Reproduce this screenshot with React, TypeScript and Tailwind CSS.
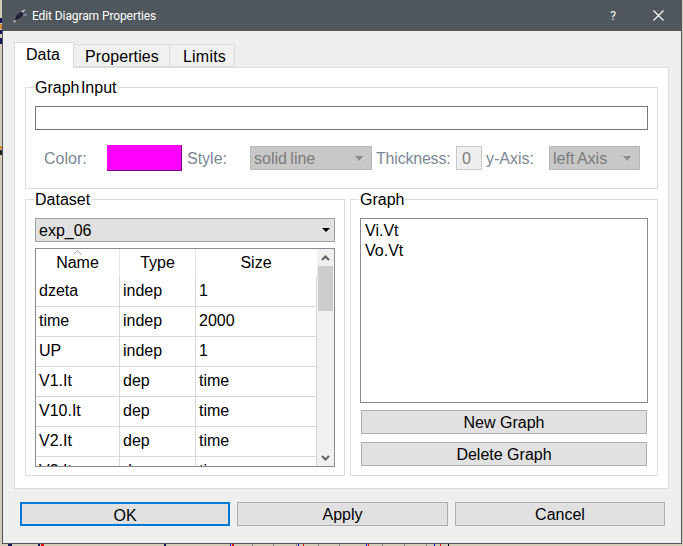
import { ReactNode } from "react";

const rows = [
  ["dzeta", "indep", "1"],
  ["time", "indep", "2000"],
  ["UP", "indep", "1"],
  ["V1.It", "dep", "time"],
  ["V10.It", "dep", "time"],
  ["V2.It", "dep", "time"],
  ["V3.It", "dep", "time"],
];

function Group({ label, className, children }: { label: string; className: string; children: ReactNode }) {
  return (
    <div className={`relative border border-[#dcdcdc] ${className}`}>
      <span className="absolute left-[8px] top-[-11px] bg-white px-px leading-[22px] [word-spacing:-3px]">{label}</span>
      {children}
    </div>
  );
}

function Button({ label, className }: { label: string; className: string }) {
  return (
    <button className={`h-[24px] border border-[#adadad] bg-[#e1e1e1] pt-[2px] leading-[20px] ${className}`}>{label}</button>
  );
}

function DisabledSelect({ label, className }: { label: string; className: string }) {
  return (
    <div className={`flex h-[24px] items-center justify-between border border-[#b8b8b8] bg-[#c8c8c8] pl-[3px] pr-[7px] text-[#7c7c7c] ${className}`}>
      <span className="pt-[2px] [word-spacing:-1px]">{label}</span>
      <svg width="9" height="5" viewBox="0 0 9 5">
        <path d="M0 0H9L4.5 5Z" fill="#8c8c8c" />
        <path d="M4.5 5L9 0V1L5 5Z" fill="#f4f4f4" />
      </svg>
    </div>
  );
}

function Chevron({ down }: { down?: boolean }) {
  return (
    <div className="flex h-[17px] items-center justify-center">
      <svg width="9" height="6" viewBox="0 0 9 6">
        <path d={down ? "M1 1L4.5 4.5L8 1" : "M1 5L4.5 1.5L8 5"} fill="none" stroke="#606060" strokeWidth="2" />
      </svg>
    </div>
  );
}

function DatasetTable() {
  return (
    <div className="mt-[6px] flex h-[219px] w-[300px] overflow-hidden border border-[#868c91] bg-white">
      <div className="w-[281px]">
        <div className="relative grid h-[27px] grid-cols-[84px_76px_121px] text-center leading-[28px]">
          <div className="border-r border-[#e6e6e6]">Name</div>
          <div className="border-r border-[#e6e6e6]">Type</div>
          <div className="pr-px">Size</div>
          <svg className="absolute left-[37px] top-[1px]" width="9" height="5" viewBox="0 0 9 5">
            <path d="M0.5 4.5L4.5 0.8L8.5 4.5" fill="none" stroke="#a0a0a0" />
          </svg>
        </div>
        {rows.map((row) => (
          <div key={row[0]} className="grid h-[30px] grid-cols-[84px_76px_121px] leading-[30px]">
            {row.map((cell, i) => (
              <div key={i} className="border-r border-b border-[#d8d8d8] pl-[3px]">
                {cell}
              </div>
            ))}
          </div>
        ))}
      </div>
      <div className="flex w-[17px] flex-col bg-[#f0f0f0]">
        <Chevron />
        <div className="mx-px h-[45px] bg-[#cdcdcd]" />
        <div className="flex-1" />
        <Chevron down />
      </div>
    </div>
  );
}

function TitleBar() {
  return (
    <div className="flex h-[31px] items-center bg-[#50585d] text-white">
      <svg className="ml-[9px]" width="16" height="16" viewBox="0 0 16 16">
        <path d="M2 14L5 7L9 4L12 6L8 10L5 11Z" fill="#1c1c30" />
        <path d="M9 3L14 1L11 5Z" fill="#b9b9c4" />
        <path d="M11 6H15V7.500H11Z" fill="#8a8fa8" />
        <path d="M1 13L4 12L3 15Z" fill="#c4c4cc" />
        <path d="M6 6L9 5.500L8 8Z" fill="#3b2a6b" />
      </svg>
      <span className="ml-[4px] font-['Roboto',sans-serif] text-[12px] leading-[16px] tracking-[-0.1px]">Edit Diagram Properties</span>
      <span className="ml-auto mr-[37px] font-['Roboto',sans-serif] text-[12px]">?</span>
      <svg className="mr-[17px]" width="11" height="11" viewBox="0 0 11 11">
        <path d="M0.500 0.500L10.500 10.500M10.500 0.500L0.500 10.500" stroke="#ffffff" strokeWidth="1.100" />
      </svg>
    </div>
  );
}

function DataTab() {
  return (
    <div className="mx-[11px] w-[655px]">
      <div className="flex h-[25px] items-end">
        <div className="relative z-10 mb-[-1px] h-[26px] w-[60px] border border-b-0 border-[#dcdcdc] bg-white pl-[11px] leading-[24px]">Data</div>
        <div className="h-[23px] w-[96px] border-y border-r border-[#dcdcdc] bg-[#f0f0f0] pl-[11px] leading-[24px] tracking-[0.1px]">Properties</div>
        <div className="h-[23px] w-[65px] border-y border-r border-[#dcdcdc] bg-[#f0f0f0] pl-[13px] leading-[24px] tracking-[0.2px]">Limits</div>
      </div>
      <div className="h-[422px] border border-[#dcdcdc] bg-white px-[10px] pt-[19px]">
        <Group label="Graph Input" className="h-[102px] w-[633px] px-[9px] pt-[18px]">
          <input className="block h-[24px] w-[613px] border border-[#767676] bg-white" />
          <div className="mt-[15px] flex h-[26px] items-center text-[#7c8794]">
            <span className="w-[72px] pl-[9px] pt-[2px]">Color:</span>
            <div className="h-[26px] w-[75px] border-r border-b border-[#7a0a7a] bg-[#ff00ff]" />
            <span className="w-[68px] pl-[5px] pt-[2px]">Style:</span>
            <DisabledSelect label="solid line" className="w-[122px]" />
            <span className="w-[84px] pl-[4px] pt-[2px] tracking-[-0.2px]">Thickness:</span>
            <div className="h-[24px] w-[26px] border border-[#c8c8c8] bg-[#efefef] pl-[5px] leading-[24px] text-[#7c7c7c]">0</div>
            <span className="w-[67px] pl-[4px] pt-[2px]">y-Axis:</span>
            <DisabledSelect label="left Axis" className="w-[91px]" />
          </div>
        </Group>
        <div className="mt-[10px] flex gap-[5px]">
          <Group label="Dataset" className="h-[277px] w-[320px] px-[9px] pt-[18px]">
            <div className="flex h-[24px] w-[300px] items-center justify-between border border-[#a0a0a0] bg-[#e1e1e1] pl-[3px] pr-[4px]">
              <span className="pt-[2px]">exp_06</span>
              <svg width="8" height="4" viewBox="0 0 8 4">
                <path d="M0 0H8L4 4Z" fill="#000000" />
              </svg>
            </div>
            <DatasetTable />
          </Group>
          <Group label="Graph" className="h-[277px] w-[308px] px-[9px] pt-[18px]">
            <div className="h-[185px] w-[288px] border border-[#868c91] px-[4px] pt-[2px] leading-[20px]">
              <div>Vi.Vt</div>
              <div>Vo.Vt</div>
            </div>
            <Button label="New Graph" className="ml-px mt-[7px] block w-[286px]" />
            <Button label="Delete Graph" className="ml-px mt-[8px] block w-[286px]" />
          </Group>
        </div>
      </div>
    </div>
  );
}

export default function App() {
  return (
    <div className="relative h-[546px] w-[683px] overflow-hidden bg-[#d4ccb6] font-['Liberation_Sans',sans-serif] text-[16px] text-black">
      {/* bits of the plot window behind the dialog */}
      <svg className="absolute inset-0" width="683" height="546" viewBox="0 0 683 546">
        <path d="M0 18h2v5H0ZM0 30h2v4H0ZM0 38h2v6H0Z" fill="#14145a" />
        <path d="M0 24h2v5H0ZM0 146h2v3H0Z" fill="#d98a2b" />
        <path d="M0 150h2v5H0Z" fill="#222222" />
        <path d="M8 544h4v2H8ZM38 544h2v2h-2ZM164 544h2v2h-2Z" fill="#14145a" />
        <path d="M41 544h3v2h-3ZM232 544h2v2h-2ZM303 544h1v2h-1ZM368 544h1v2h-1ZM440 544h1v2h-1Z" fill="#e01010" />
        <path d="M230 544h1v2h-1ZM298 544h1v2h-1ZM366 544h1v2h-1ZM434 544h1v2h-1Z" fill="#1010e0" />
        <path d="M252 544h1v2h-1ZM273 544h1v2h-1ZM296 544h1v2h-1ZM318 544h1v2h-1ZM339 544h1v2h-1ZM382 544h1v2h-1ZM404 544h1v2h-1ZM426 544h1v2h-1Z" fill="#8a8a8a" />
        <path d="M448 544h1v2h-1Z" fill="#000000" />
      </svg>
      <div className="relative ml-[2px] h-[544px] w-[680px] border border-t-0 border-[#50585d] bg-[#efefef]">
        <TitleBar />
        <div className="pt-[11px]">
          <DataTab />
        </div>
        <div className="ml-[17px] mt-[13px] flex gap-[7px]">
          <button className="h-[24px] w-[210px] border-2 border-[#0078d7] bg-[#e1e1e1] pt-[2px] leading-[20px]">OK</button>
          <Button label="Apply" className="w-[211px]" />
          <Button label="Cancel" className="w-[210px]" />
        </div>
      </div>
    </div>
  );
}
